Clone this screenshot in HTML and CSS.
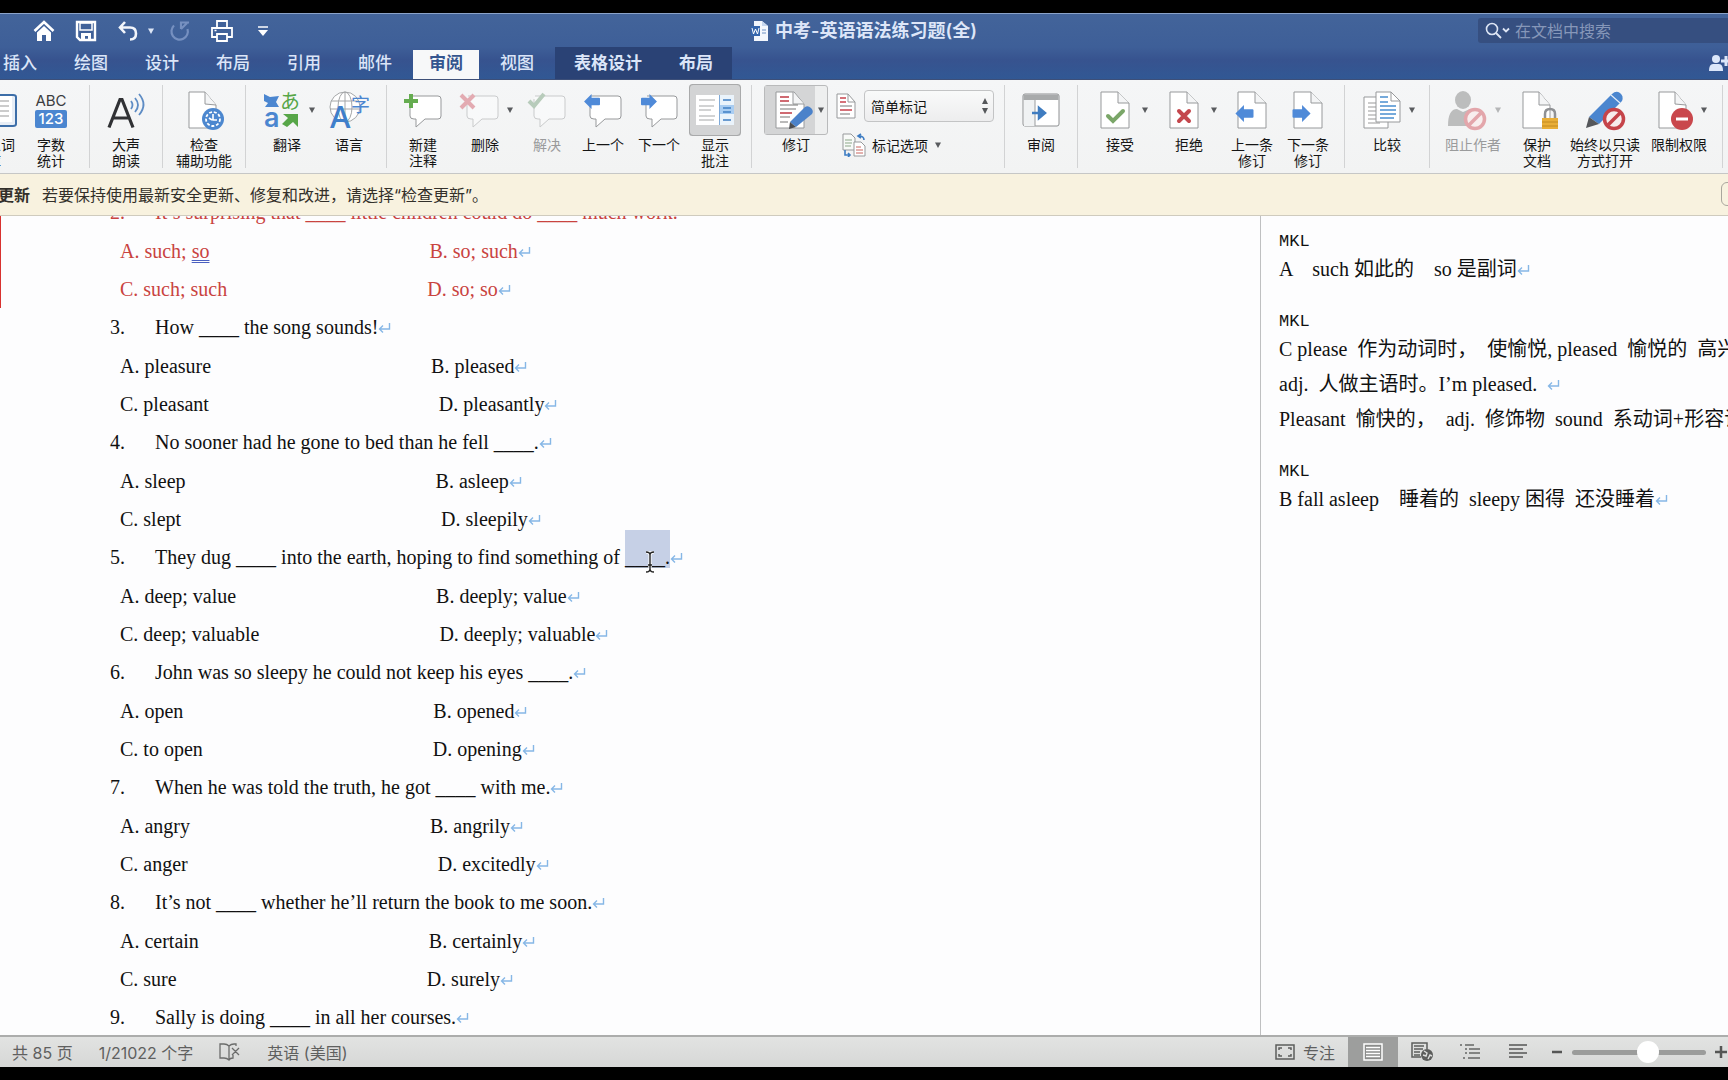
FILE: index.html
```html
<!DOCTYPE html>
<html lang="zh-CN">
<head>
<meta charset="utf-8">
<meta name="viewport" content="width=device-width, initial-scale=1">
<title>中考-英语语法练习题(全)</title>
<link rel="stylesheet" href="styles.css">
</head>
<body>
<svg class="defs" aria-hidden="true">
  <symbol id="ret" viewBox="0 0 13 11"><path d="M11.5 1v6H2M5 3.500L1.500 7L5 10.500" fill="none" stroke="#86b7e6" stroke-width="1.400"/></symbol>
  <symbol id="caret" viewBox="0 0 8 8"><path d="M1 1.500h6L4 7z" fill="currentColor"/></symbol>
  <symbol id="page" viewBox="0 0 40 40"><path d="M6 2h17l11 11v25H6z" fill="#fff" stroke="#97999b"/><path d="M23 2v11h11" fill="#f4f5f6" stroke="#97999b"/></symbol>
  <symbol id="bubble" viewBox="0 0 40 40"><path d="M8 6h27q3 0 3 3v17q0 3-3 3H22l-9 8v-8h-2q-4 0-4-3V9" fill="#fff" stroke="#97999b"/></symbol>
  <symbol id="left" viewBox="0 0 18 16"><path d="M0 8L8 0v4h8q1 0 1 1v6q0 1-1 1H8v4z" fill="#4f8ad8"/></symbol>
  <symbol id="right" viewBox="0 0 18 16"><path d="M18 8L10 0v4H2Q1 4 1 5v6q0 1 1 1h8v4z" fill="#4f8ad8"/></symbol>
</svg>

<div class="app">
<header class="titlebar">
  <div class="quick">
    <button aria-label="主页"><svg viewBox="0 0 22 22" width="22" height="22"><path d="M1.500 11L11 2l9.500 9" fill="none" stroke="#fff" stroke-width="2.600"/><path d="M4 12.500L11 6l7 6.500V21h-5v-6H9v6H4z" fill="#fff"/></svg></button>
    <button aria-label="保存"><svg viewBox="0 0 22 22" width="22" height="22"><path d="M2 2h18v18H5l-3-3z" fill="none" stroke="#fff" stroke-width="2.400"/><path d="M5 3h12v7H5z" fill="none" stroke="#fff" stroke-width="1.500"/><path d="M6 13h10v7h-3v-4h-3v4H6z" fill="#fff"/></svg></button>
    <button class="with-caret" aria-label="撤消"><svg viewBox="0 0 22 22" width="22" height="22"><path d="M8 2L3 7.500L8 13M3 7.500h10q6 0 6 6t-6 6" fill="none" stroke="#f2f5fb" stroke-width="2.600"/></svg><svg class="caret"><use href="#caret"/></svg></button>
    <button class="dim" aria-label="恢复"><svg viewBox="0 0 22 22" width="22" height="22"><path d="M5 5.500A8.200 8.200 0 1 0 18.500 9M12 9V2.500h8M18 3l-6 6" fill="none" stroke="#7690c0" stroke-width="2.200"/></svg></button>
    <button aria-label="打印"><svg viewBox="0 0 22 22" width="22" height="22"><path d="M6 8V1h10v7M6 17H1V8h20v9h-5M6 14h10v7H6z" fill="none" stroke="#fff" stroke-width="1.800"/><path d="M3.500 10.500h2" stroke="#fff" stroke-width="1.500"/></svg></button>
    <button class="more" aria-label="自定义工具栏"><svg viewBox="0 0 12 12" width="12" height="12"><path d="M1 2h10" stroke="#fff" stroke-width="1.500"/><path d="M1 5h10l-5 6z" fill="#fff"/></svg></button>
  </div>
  <h1 class="doc-title"><svg viewBox="0 0 18 20" width="18" height="20"><path d="M3 0h8l6 5v15H3z" fill="#f3f7fd"/><path d="M11 0l6 5h-6z" fill="#c5d6ee"/><path d="M0 5h9v10H0z" fill="#3566ad"/><path d="M1 7l1.500 6L4.500 8l2 5L8 7" fill="none" stroke="#fff"/><path d="M11 9h4M11 12h4" stroke="#6c90c4"/></svg>中考-英语语法练习题(全)</h1>
  <label class="search"><svg viewBox="0 0 26 18" width="26" height="18"><circle cx="7" cy="7" r="5.500" fill="none" stroke="#dde5f4" stroke-width="1.600"/><path d="M11 11l5 5M18 6.500l3 3l3-3" fill="none" stroke="#dde5f4" stroke-width="1.800"/></svg><input type="search" placeholder="在文档中搜索" aria-label="在文档中搜索"></label>
</header>

<nav class="tabs">
  <a href="#insert">插入</a><a href="#draw">绘图</a><a href="#design">设计</a><a href="#layout">布局</a><a href="#refs">引用</a><a href="#mail">邮件</a><a class="active" href="#review">审阅</a><a href="#view">视图</a>
  <div class="context"><a href="#tdesign">表格设计</a><a href="#tlayout">布局</a></div>
  <button class="share" aria-label="共享"><svg viewBox="0 0 24 18" width="24" height="18"><circle cx="7" cy="5" r="4" fill="#dbe6fa"/><path d="M0 17q0-7 4-7h6q4 0 4 7z" fill="#dbe6fa"/><path d="M12 7h10M17 2v10" stroke="#dbe6fa" stroke-width="3"/></svg></button>
</nav>

<div class="ribbon">
  <div class="group first">
    <button class="tool w60"><span class="art"><svg viewBox="0 0 40 40"><path d="M4 5h35q3 0 3 2v27q0 2-3 2H4z" fill="#e8eef6" stroke="#3d6ea8" stroke-width="2"/><path d="M4 6h34v26H4z" fill="#fff"/><path d="M20 11h15M20 16h15M20 21h15M20 26h15" stroke="#999"/></svg></span>同义词<br>库</button>
    <button class="tool w54"><span class="art"><svg viewBox="0 0 40 40"><text x="20" y="16" text-anchor="middle" class="t-abc">ABC</text><rect x="4" y="20" width="32" height="18" rx="2" fill="#4b86d0"/><text x="20" y="34" text-anchor="middle" class="t-123">123</text></svg></span>字数<br>统计</button>
  </div>
  <div class="group">
    <button class="tool w56"><span class="art"><svg viewBox="0 0 40 40"><path d="M3 37.500L14 9.500h2L27 37.500M7.500 28h15" fill="none" stroke="#303134" stroke-width="3.200"/><path d="M25 11q3 4 0 8M29 8q6 7 0 14M33 4q9 10.500 0 21" fill="none" stroke="#5e8cc4" stroke-width="1.800"/></svg></span>大声<br>朗读</button>
  </div>
  <div class="group">
    <button class="tool w66"><span class="art"><svg viewBox="0 0 40 40"><path d="M5 2h16l11 13v23H5z" fill="#fff" stroke="#97999b"/><path d="M21 2v12l11 1" fill="#f4f5f6" stroke="#97999b"/><circle cx="29" cy="29" r="11" fill="#4c87cf"/><circle cx="29" cy="29" r="7" fill="none" stroke="#fff" stroke-width="1.800" stroke-dasharray="3 1.800"/><path d="M29 24v6h4M25 28l3 2" fill="none" stroke="#fff" stroke-width="1.600"/></svg></span>检查<br>辅助功能</button>
  </div>
  <div class="group">
    <button class="tool w66"><span class="row"><span class="art"><svg viewBox="0 0 40 40"><path d="M2 4l6 3 9-1-3 6 3 5H3l3-4-4-2z" fill="#4b86d0"/><text x="2" y="37" class="t-a">a</text><text x="18" y="19" class="t-kana">あ</text><path d="M21 24h15v13l-5-5-6 5-5-3 6-6z" fill="#57a648"/></svg></span><svg class="caret"><use href="#caret"/></svg></span>翻译</button>
    <button class="tool w58"><span class="art"><svg viewBox="0 0 40 40"><g fill="#fff" stroke="#a4a6a8"><circle cx="16" cy="17" r="15"/><ellipse cx="16" cy="17" rx="7" ry="15" fill="none"/><path d="M2 11h28M1 19h30M16 2v30" fill="none"/></g><text x="1" y="38" class="t-bigA">A</text><text x="22" y="22" class="t-zi">字</text></svg></span>语言</button>
  </div>
  <div class="group">
    <button class="tool w56"><span class="art"><svg viewBox="0 0 40 40"><use href="#bubble"/><path d="M1 11h14M8 4v14" stroke="#65ac50" stroke-width="4"/></svg></span>新建<br>注释</button>
    <button class="tool w68"><span class="row"><span class="art faded"><svg viewBox="0 0 40 40"><use href="#bubble"/><path d="M1 5l13 13M14 5L1 18" stroke="#cf5260" stroke-width="4"/></svg></span><svg class="caret"><use href="#caret"/></svg></span>删除</button>
    <button class="tool w56" disabled><span class="art faded"><svg viewBox="0 0 40 40"><use href="#bubble"/><path d="M2 11l5 5L17 4" fill="none" stroke="#6f9a74" stroke-width="4"/></svg></span>解决</button>
    <button class="tool w56"><span class="art"><svg viewBox="0 0 40 40"><use href="#bubble"/><use href="#left" x="1" y="4" width="17" height="15"/></svg></span>上一个</button>
    <button class="tool w56"><span class="art"><svg viewBox="0 0 40 40"><use href="#bubble"/><use href="#right" x="1" y="4" width="17" height="15"/></svg></span>下一个</button>
    <button class="tool w56" aria-pressed="true"><span class="art pressed"><svg viewBox="0 0 40 40"><path d="M1 5h38v30H1z" fill="#fff"/><path d="M24 5h15v30H24z" fill="#eaf3fb"/><path d="M24 15h15v9H24z" fill="#a9cdf2"/><path d="M4 10h16M4 16h15M4 20h12M4 26h16M4 30h15" stroke="#a5a7a8"/><path d="M28 10h8M28 18h8M28 22h8M28 30h8" stroke="#3f7fc4" stroke-width="1.500"/><path d="M24.500 5v30" stroke="#7faad8"/></svg></span>显示<br>批注</button>
  </div>
  <div class="group track">
    <button class="tool w64"><span class="split"><span class="art"><svg viewBox="0 0 40 40"><path d="M7 2h18l10 12v24H7z" fill="#fff" stroke="#97999b"/><path d="M24 2v12h11" fill="#f4f5f6" stroke="#97999b"/><path d="M11 7h9M11 11h9M11 23h12" stroke="#c03a44" stroke-width="1.500"/><path d="M11 15h18M11 19h16M11 27h10M11 32h8" stroke="#777" stroke-width="1.200"/><path d="M21 32L36 17q3-2 6 1t1 6L27 37z" fill="#4b82ca"/><path d="M21 32l6 5-7 2z" fill="#4a4c50"/></svg></span><svg class="caret"><use href="#caret"/></svg></span>修订</button>
    <div class="options">
      <div class="markup"><svg viewBox="0 0 20 26" width="20" height="26"><path d="M1 1h11l7 8v16H1z" fill="#fff" stroke="#97999b"/><path d="M12 1v8h7" fill="none" stroke="#97999b"/><path d="M4 5h6M4 9h6M4 17h12" stroke="#c8434d" stroke-width="1.500"/><path d="M4 13h12M4 21h10" stroke="#777"/></svg>
        <span class="select"><select aria-label="标记显示"><option>简单标记</option></select><svg viewBox="0 0 8 18" width="8" height="18"><path d="M4 1l3 6H1zM4 17l3-6H1z" fill="#55575a"/></svg></span></div>
      <button class="marks"><svg viewBox="0 0 24 24" width="24" height="24"><path d="M1 1h8l4 4v12H1z" fill="#f8faf8" stroke="#97999b"/><path d="M12 9h7l4 4v10H12z" fill="#fff" stroke="#97999b"/><path d="M3 7h7M3 10h7M3 13h6" stroke="#8ba687"/><path d="M14 14h5M14 17h7M14 20h7" stroke="#c8655f"/><path d="M22 7q0-4-5-4m2-2l-3 2 3 2M3 17v5h5M6 20l2 2-2 2" fill="none" stroke="#3d7cc2" stroke-width="1.600"/></svg>标记选项<svg class="caret"><use href="#caret"/></svg></button>
    </div>
  </div>
  <div class="group">
    <button class="tool w56"><span class="art"><svg viewBox="0 0 40 40"><rect x="2" y="4" width="36" height="32" rx="2" fill="#fff" stroke="#8e9092"/><path d="M2.500 4.500h35V10h-35z" fill="#a8aaab"/><path d="M3 10h11v26H3z" fill="#f0f2f3"/><path d="M14 10v26" stroke="#9a9c9e"/><path d="M11 23h10M18 18l6 5-6 5z" stroke="#3f7cc0" stroke-width="2.500" fill="#3f7cc0"/></svg></span>审阅</button>
  </div>
  <div class="group">
    <button class="tool w68"><span class="row"><span class="art"><svg viewBox="0 0 40 40"><use href="#page"/><path d="M13 26l5 5 10-10" fill="none" stroke="#7aa668" stroke-width="4" stroke-linecap="round"/></svg></span><svg class="caret"><use href="#caret"/></svg></span>接受</button>
    <button class="tool w70"><span class="row"><span class="art"><svg viewBox="0 0 40 40"><use href="#page"/><path d="M15 21l10 10M25 21L15 31" stroke="#c4474d" stroke-width="4" stroke-linecap="round"/></svg></span><svg class="caret"><use href="#caret"/></svg></span>拒绝</button>
    <button class="tool w56"><span class="art"><svg viewBox="0 0 40 40"><use href="#page"/><use href="#left" x="3" y="15" width="20" height="17"/></svg></span>上一条<br>修订</button>
    <button class="tool w56"><span class="art"><svg viewBox="0 0 40 40"><use href="#page"/><use href="#right" x="3" y="15" width="20" height="17"/></svg></span>下一条<br>修订</button>
  </div>
  <div class="group">
    <button class="tool w68"><span class="row"><span class="art"><svg viewBox="0 0 40 40"><path d="M2 7h24v31H2z" fill="#fff" stroke="#97999b"/><path d="M6 13h12M6 17h12M6 21h12M6 25h12M6 29h12M6 33h12" stroke="#999"/><path d="M14 2h15l9 9v21H14z" fill="#fff" stroke="#97999b"/><path d="M29 2v9h9" fill="none" stroke="#97999b"/><path d="M18 7h8M18 12h8M18 16h16M18 20h16M18 24h16M18 28h14" stroke="#4a8ed0" stroke-width="1.400"/></svg></span><svg class="caret"><use href="#caret"/></svg></span>比较</button>
  </div>
  <div class="group">
    <button class="tool w70" disabled><span class="row"><span class="art"><svg viewBox="0 0 40 40"><ellipse cx="15" cy="10" rx="8" ry="9" fill="#bcbdbd"/><path d="M0 36q0-17 9-17l6 3 7-3q5 1 6 17z" fill="#bcbdbd"/><circle cx="27" cy="29" r="9.500" fill="#f8eeee" stroke="#e3a6ab" stroke-width="3.500"/><path d="M20 36l14-14" stroke="#e3a6ab" stroke-width="3.500"/></svg></span><svg class="caret"><use href="#caret"/></svg></span>阻止作者</button>
    <button class="tool w58"><span class="art"><svg viewBox="0 0 40 40"><path d="M6 2h16l11 13v23H6z" fill="#fff" stroke="#97999b"/><path d="M22 2v13h11" fill="#f4f5f6" stroke="#97999b"/><path d="M28 29v-5q0-5 5-5t5 5v5" fill="none" stroke="#8f9194" stroke-width="2.500"/><path d="M25 28h16v11H25z" fill="#e9ae37"/><path d="M25 32h16M25 36h16" stroke="#c28a21"/></svg></span>保护<br>文档</button>
    <button class="tool w78"><span class="art"><svg viewBox="0 0 40 40"><path d="M4 27L27 4q4-4 8-1t2 8L14 34z" fill="#4b86cf"/><path d="M4 27l10 7L1 38z" fill="#55575b"/><path d="M26 5l9 8" stroke="#e6eef8" stroke-width="1.200"/><circle cx="29" cy="29" r="9.500" fill="#f6eded" stroke="#c5444a" stroke-width="3.500"/><path d="M22 36l14-14" stroke="#c5444a" stroke-width="3.500"/></svg></span>始终以只读<br>方式打开</button>
    <button class="tool w70"><span class="row"><span class="art"><svg viewBox="0 0 40 40"><path d="M5 2h16l11 13v23H5z" fill="#fff" stroke="#97999b"/><path d="M21 2v12l11 1" fill="#f4f5f6" stroke="#97999b"/><circle cx="28" cy="29" r="11" fill="#c9474c"/><path d="M22 29h12" stroke="#fff" stroke-width="3"/></svg></span><svg class="caret"><use href="#caret"/></svg></span>限制权限</button>
  </div>
</div>

<div class="notice"><strong>更新</strong><span>若要保持使用最新安全更新、修复和改进，请选择“检查更新”。</span><button aria-label="检查更新"></button></div>

<main class="workspace">
  <article class="document">
    <section class="changed">
      <h2><span>2.</span>It’s surprising that ____ little children could do ____ much work.</h2>
      <p>A. such; <u>so</u>                                            B. so; such<svg class="ret"><use href="#ret"/></svg></p>
      <p>C. such; such                                        D. so; so<svg class="ret"><use href="#ret"/></svg></p>
    </section>
    <section>
      <h2><span>3.</span>How ____ the song sounds!<svg class="ret"><use href="#ret"/></svg></h2>
      <p>A. pleasure                                            B. pleased<svg class="ret"><use href="#ret"/></svg></p>
      <p>C. pleasant                                              D. pleasantly<svg class="ret"><use href="#ret"/></svg></p>
    </section>
    <section>
      <h2><span>4.</span>No sooner had he gone to bed than he fell ____.<svg class="ret"><use href="#ret"/></svg></h2>
      <p>A. sleep                                                  B. asleep<svg class="ret"><use href="#ret"/></svg></p>
      <p>C. slept                                                    D. sleepily<svg class="ret"><use href="#ret"/></svg></p>
    </section>
    <section>
      <h2><span>5.</span>They dug ____ into the earth, hoping to find something of <mark>____.<svg class="ibeam" viewBox="0 0 10 22"><path d="M1 1q4 0 4 3q0-3 4-3M5 4v14M1 21q4 0 4-3q0 3 4 3M3 14h4" fill="none" stroke="#fff" stroke-width="3"/><path d="M1 1q4 0 4 3q0-3 4-3M5 4v14M1 21q4 0 4-3q0 3 4 3M3 14h4" fill="none" stroke="#222" stroke-width="1.400"/></svg></mark><svg class="ret"><use href="#ret"/></svg></h2>
      <p>A. deep; value                                        B. deeply; value<svg class="ret"><use href="#ret"/></svg></p>
      <p>C. deep; valuable                                    D. deeply; valuable<svg class="ret"><use href="#ret"/></svg></p>
    </section>
    <section>
      <h2><span>6.</span>John was so sleepy he could not keep his eyes ____.<svg class="ret"><use href="#ret"/></svg></h2>
      <p>A. open                                                  B. opened<svg class="ret"><use href="#ret"/></svg></p>
      <p>C. to open                                              D. opening<svg class="ret"><use href="#ret"/></svg></p>
    </section>
    <section>
      <h2><span>7.</span>When he was told the truth, he got ____ with me.<svg class="ret"><use href="#ret"/></svg></h2>
      <p>A. angry                                                B. angrily<svg class="ret"><use href="#ret"/></svg></p>
      <p>C. anger                                                  D. excitedly<svg class="ret"><use href="#ret"/></svg></p>
    </section>
    <section>
      <h2><span>8.</span>It’s not ____ whether he’ll return the book to me soon.<svg class="ret"><use href="#ret"/></svg></h2>
      <p>A. certain                                              B. certainly<svg class="ret"><use href="#ret"/></svg></p>
      <p>C. sure                                                  D. surely<svg class="ret"><use href="#ret"/></svg></p>
    </section>
    <section>
      <h2><span>9.</span>Sally is doing ____ in all her courses.<svg class="ret"><use href="#ret"/></svg></h2>
    </section>
  </article>
  <aside class="comments">
    <section><h3>MKL</h3>
      <p>A    such 如此的    so 是副词<svg class="ret"><use href="#ret"/></svg></p></section>
    <section><h3>MKL</h3>
      <p>C please  作为动词时，  使愉悦, pleased  愉悦的  高兴</p>
      <p>adj.  人做主语时。I’m pleased.  <svg class="ret"><use href="#ret"/></svg></p>
      <p>Pleasant  愉快的，  adj.  修饰物  sound  系动词+形容词</p></section>
    <section><h3>MKL</h3>
      <p>B fall asleep    睡着的  sleepy 困得  还没睡着<svg class="ret"><use href="#ret"/></svg></p></section>
  </aside>
</main>

<footer class="status">
  <span>共 85 页</span><span>1/21022 个字</span>
  <button aria-label="拼写检查"><svg viewBox="0 0 22 18" width="22" height="18"><path d="M10 16V3Q8 1 5 1H1v14h4q3 0 5 2q1-2 4-2V12M10 3q2-2 5-2h2v2M13 5l7 7M20 5l-7 7" fill="none" stroke="#6b6c6b" stroke-width="1.300"/></svg></button>
  <span>英语 (美国)</span>
  <div class="views">
    <button class="focus"><svg viewBox="0 0 20 16" width="20" height="16"><path d="M1 1h18v14H1zM4 6V4h3M13 4h3v2M16 10v2h-3M7 12H4v-2" fill="none" stroke="#5c5d5c" stroke-width="1.500"/></svg>专注</button>
    <button class="on" aria-label="页面视图"><svg viewBox="0 0 20 18" width="20" height="18"><path d="M1 1h18v16H1z" fill="#8b8c8b" stroke="#fff" stroke-width="1.500"/><path d="M3 4.500h14M3 7.500h14M3 10.500h14M3 13.500h14" stroke="#fff" stroke-width="1.300"/></svg></button>
    <button aria-label="Web 版式"><svg viewBox="0 0 22 20" width="22" height="20"><path d="M10 15H1V1h15v6M3 4h10M3 7h9M3 10h6M3 13h6" fill="none" stroke="#5c5d5c" stroke-width="1.500"/><circle cx="16" cy="13" r="6" fill="#5c5d5c"/><path d="M13 9l3 2-1 3-3-1M17 17l2-4 2 1" fill="none" stroke="#dcdddc" stroke-width="1.400"/></svg></button>
    <button aria-label="大纲"><svg viewBox="0 0 22 18" width="22" height="18"><path d="M1 2h2M6 2h9M6 6h2M10 6h11M6 10h2M10 10h11M4 15h2M9 15h12" stroke="#666766" stroke-width="1.500"/></svg></button>
    <button aria-label="草稿"><svg viewBox="0 0 20 18" width="20" height="18"><path d="M1 2h18M1 6h14M1 10h18M1 14h14" stroke="#555655" stroke-width="1.500"/></svg></button>
    <button class="zoom-out" aria-label="缩小"><svg viewBox="0 0 12 12" width="12" height="12"><path d="M1 6h10" stroke="#555655" stroke-width="2.500"/></svg></button>
    <input type="range" min="0" max="100" value="58" aria-label="缩放">
    <button class="zoom-in" aria-label="放大"><svg viewBox="0 0 12 12" width="12" height="12"><path d="M0 6h12M6 0v12" stroke="#555655" stroke-width="2.500"/></svg></button>
  </div>
</footer>
</div>
</body>
</html>
```

FILE: styles.css
```css
* { box-sizing: border-box; }
html, body { height: 100%; margin: 0; }
body {
  background: #000;
  padding: 13px 0;
  font-family: Inter, "Noto Sans CJK SC", sans-serif;
  overflow: hidden;
}
button, input, select { font: inherit; color: inherit; border: 0; background: none; padding: 0; margin: 0; }
h1, h2, h3, p { margin: 0; font-weight: 400; }
a { text-decoration: none; color: inherit; }
svg { flex: none; display: block; }
.defs { position: absolute; width: 0; height: 0; }
.caret { width: 8px; height: 8px; color: #595b5e; }

.app { height: 100%; display: flex; flex-direction: column; overflow: hidden; }

/* title bar */
.titlebar {
  display: grid;
  grid-template-columns: 1fr auto 1fr;
  align-items: center;
  height: 34px;
  flex: none;
  border-top: 1px solid #8ba3c9;
  background: linear-gradient(#43649a, #3e5f98);
}
.quick { display: flex; align-items: center; gap: 20px; padding-left: 33px; }
.quick .with-caret { display: flex; align-items: center; gap: 8px; }
.quick .with-caret .caret { color: #dde6f6; }
.quick .more { margin-left: 4px; }
.quick .dim { margin-left: -6px; }
.doc-title { display: flex; align-items: center; gap: 6px; font-size: 18px; font-weight: 600; color: #dde6f8; line-height: 24px; }
.search {
  justify-self: end;
  display: flex; align-items: center; gap: 4px;
  width: 250px; height: 25px;
  padding-left: 7px;
  background: #364f80;
  border-radius: 3px 0 0 3px;
}
.search input { width: 100%; min-width: 0; font-size: 16px; line-height: 20px; outline: 0; }
.search input::placeholder { color: #8697b9; opacity: 1; }

/* tab strip */
.tabs {
  display: flex; gap: 5px;
  height: 33px;
  flex: none;
  align-items: flex-end;
  padding-left: 1px;
  margin-left: -14px;
  background: linear-gradient(#3e5f98, #37538f 40%, #315894);
  border-bottom: 1px solid #3d4f78;
  color: #dbe5f8;
  overflow: hidden;
}
.tabs a { padding: 0 16px; font-size: 17px; font-weight: 500; line-height: 26px; height: 29px; }
.tabs .active { background: #f7f8f9; color: #34558f; font-weight: 600; }
.context { display: flex; gap: 5px; height: 33px; align-items: flex-end; padding: 0 3px; background: #2a4275; }
.context a { font-weight: 600; }
.share { margin-left: auto; margin-right: -5px; align-self: center; }

/* ribbon */
.ribbon { display: flex; flex: none; height: 94px; padding: 5px 0; background: linear-gradient(#f5f6f7, #f2f3f3); border-bottom: 1px solid #c6c7c6; overflow: hidden; }
.group { display: flex; flex: none; padding: 5px 8px 0; border-right: 1px solid #d2d3d4; height: 83px; align-items: flex-start; }
.group.first { margin-left: -36px; padding-left: 0; padding-right: 11px; }
.group.track { padding: 5px 10px 0 12px; gap: 8px; }
.tool { flex: none; font-size: 14px; line-height: 16px; color: #151515; text-align: center; white-space: nowrap; display: block; }
.tool:disabled { color: #9a9b9c; }
.tool:disabled .caret { color: #b5b6b7; }
.tool .art { display: block; width: 40px; height: 40px; margin: 0 auto 7px; }
.tool .art svg { width: 40px; height: 40px; overflow: visible; }
.row { display: flex; justify-content: center; align-items: center; gap: 6px; padding-left: 4px; margin-bottom: 7px; }
.tool .row .art { margin: 0; }
.faded { opacity: .45; }
.tool .pressed { box-shadow: 0 0 0 5px #d3d4d5, 0 0 0 6px #a9aaab; border-radius: 1px; background: #d3d4d5; }
.split { display: flex; align-items: center; height: 50px; margin: -5px 0 2px; border: 1px solid #b9babb; border-radius: 3px; background: #eeefef; gap: 2px; }
.tool .split .art { width: 50px; height: 48px; margin: 0; padding: 4px; background: #d4d5d6; }
.w54 { width: 54px; } .w56 { width: 56px; } .w58 { width: 58px; } .w60 { width: 60px; } .w64 { width: 64px; }
.w66 { width: 66px; } .w68 { width: 68px; } .w70 { width: 70px; } .w78 { width: 78px; }
.t-abc { font-size: 15px; fill: #3c3d3f; }
.t-123 { font-size: 15px; font-weight: 500; fill: #fff; }
.t-a { font: 600 27px Inter, sans-serif; fill: #4b86d0; }
.t-kana { font: 20px "Noto Sans CJK JP", sans-serif; fill: #57a648; }
.t-bigA { font: 600 31px "Open Sans", sans-serif; fill: #3f7fcb; }
.t-zi { font: 19px "Noto Sans CJK SC", sans-serif; fill: #4b86d0; }
.options { display: flex; flex-direction: column; gap: 11px; font-size: 14px; color: #151515; }
.markup { display: flex; align-items: center; gap: 8px; }
.select { position: relative; display: block; }
.select select { appearance: none; width: 130px; height: 32px; padding: 0 6px; border: 1px solid #c3c4c5; border-radius: 4px; background: linear-gradient(#f9fafa, #ededee); }
.select svg { position: absolute; right: 5px; top: 7px; pointer-events: none; }
.marks { display: flex; align-items: center; gap: 6px; padding-left: 6px; }

/* update notice */
.notice { display: flex; flex: none; align-items: center; height: 42px; gap: 12px; margin-left: -2px; padding-bottom: 2px; font-size: 16px; color: #33302a; background: #f8f2df; border-bottom: 1px solid #cfcbbe; }
.notice strong { font-weight: 600; }
.notice button { margin-left: auto; margin-right: -17px; width: 24px; height: 24px; border: 1px solid #a9a79d; border-radius: 6px; }

/* document and comments */
.workspace { flex: 1; min-height: 0; display: flex; background: #fdfdfe; font-family: "Liberation Serif", "Noto Sans CJK SC", serif; font-size: 20px; color: #111; overflow: hidden; }
.document { flex: 1; min-width: 0; margin-top: -23px; }
.document section { padding-left: 110px; }
.document h2, .document p, .comments p { white-space: pre; }
.document h2 { font-size: 20px; line-height: 39px; }
.document h2 > span { display: inline-block; width: 45px; }
.document p { line-height: 38px; padding-left: 10px; }
.document .changed { color: #c9433f; border-left: 1px solid #d8322f; padding-left: 109px; }
.document u { text-decoration: underline double #4a5fc0 1px; text-underline-offset: 2px; }
mark { position: relative; background: #c6d0e6; color: inherit; padding-top: 16px; }
.ibeam { position: absolute; left: 20px; bottom: -5px; width: 10px; height: 22px; }
.ret { display: inline-block; width: 13px; height: 11px; vertical-align: 1px; }
.comments { flex: none; width: 468px; border-left: 1px solid #bfc0c1; padding: 19px 0 0 18px; display: flex; flex-direction: column; gap: 28px; overflow: hidden; }
.comments section { display: flex; flex-direction: column; }
.comments h3 { font: 17px/14px "Liberation Mono", monospace; margin-bottom: 3px; }
.comments p { line-height: 35px; }

/* status bar */
.status { display: flex; flex: none; align-items: center; height: 32px; padding-left: 12px; gap: 26px; font-size: 16px; color: #5f605f; background: linear-gradient(#e2e3e2, #d6d7d6); border-top: 2px solid #acadac; white-space: nowrap; }
.views { margin-left: auto; display: flex; align-items: center; height: 100%; padding-right: 1px; }
.views button { width: 48px; height: 100%; display: flex; align-items: center; justify-content: center; }
.views .focus { width: auto; gap: 8px; margin-right: 13px; }
.views .on { width: 50px; background: #9d9e9d; }
.views .zoom-out { width: 12px; margin: 0 9px; }
.views .zoom-in { width: 12px; margin-left: 9px; }
.views input { appearance: none; width: 134px; height: 5px; border-radius: 3px; background: #9b9c9b; }
.views input::-webkit-slider-thumb { appearance: none; width: 22px; height: 22px; border-radius: 50%; background: #fff; }
```
